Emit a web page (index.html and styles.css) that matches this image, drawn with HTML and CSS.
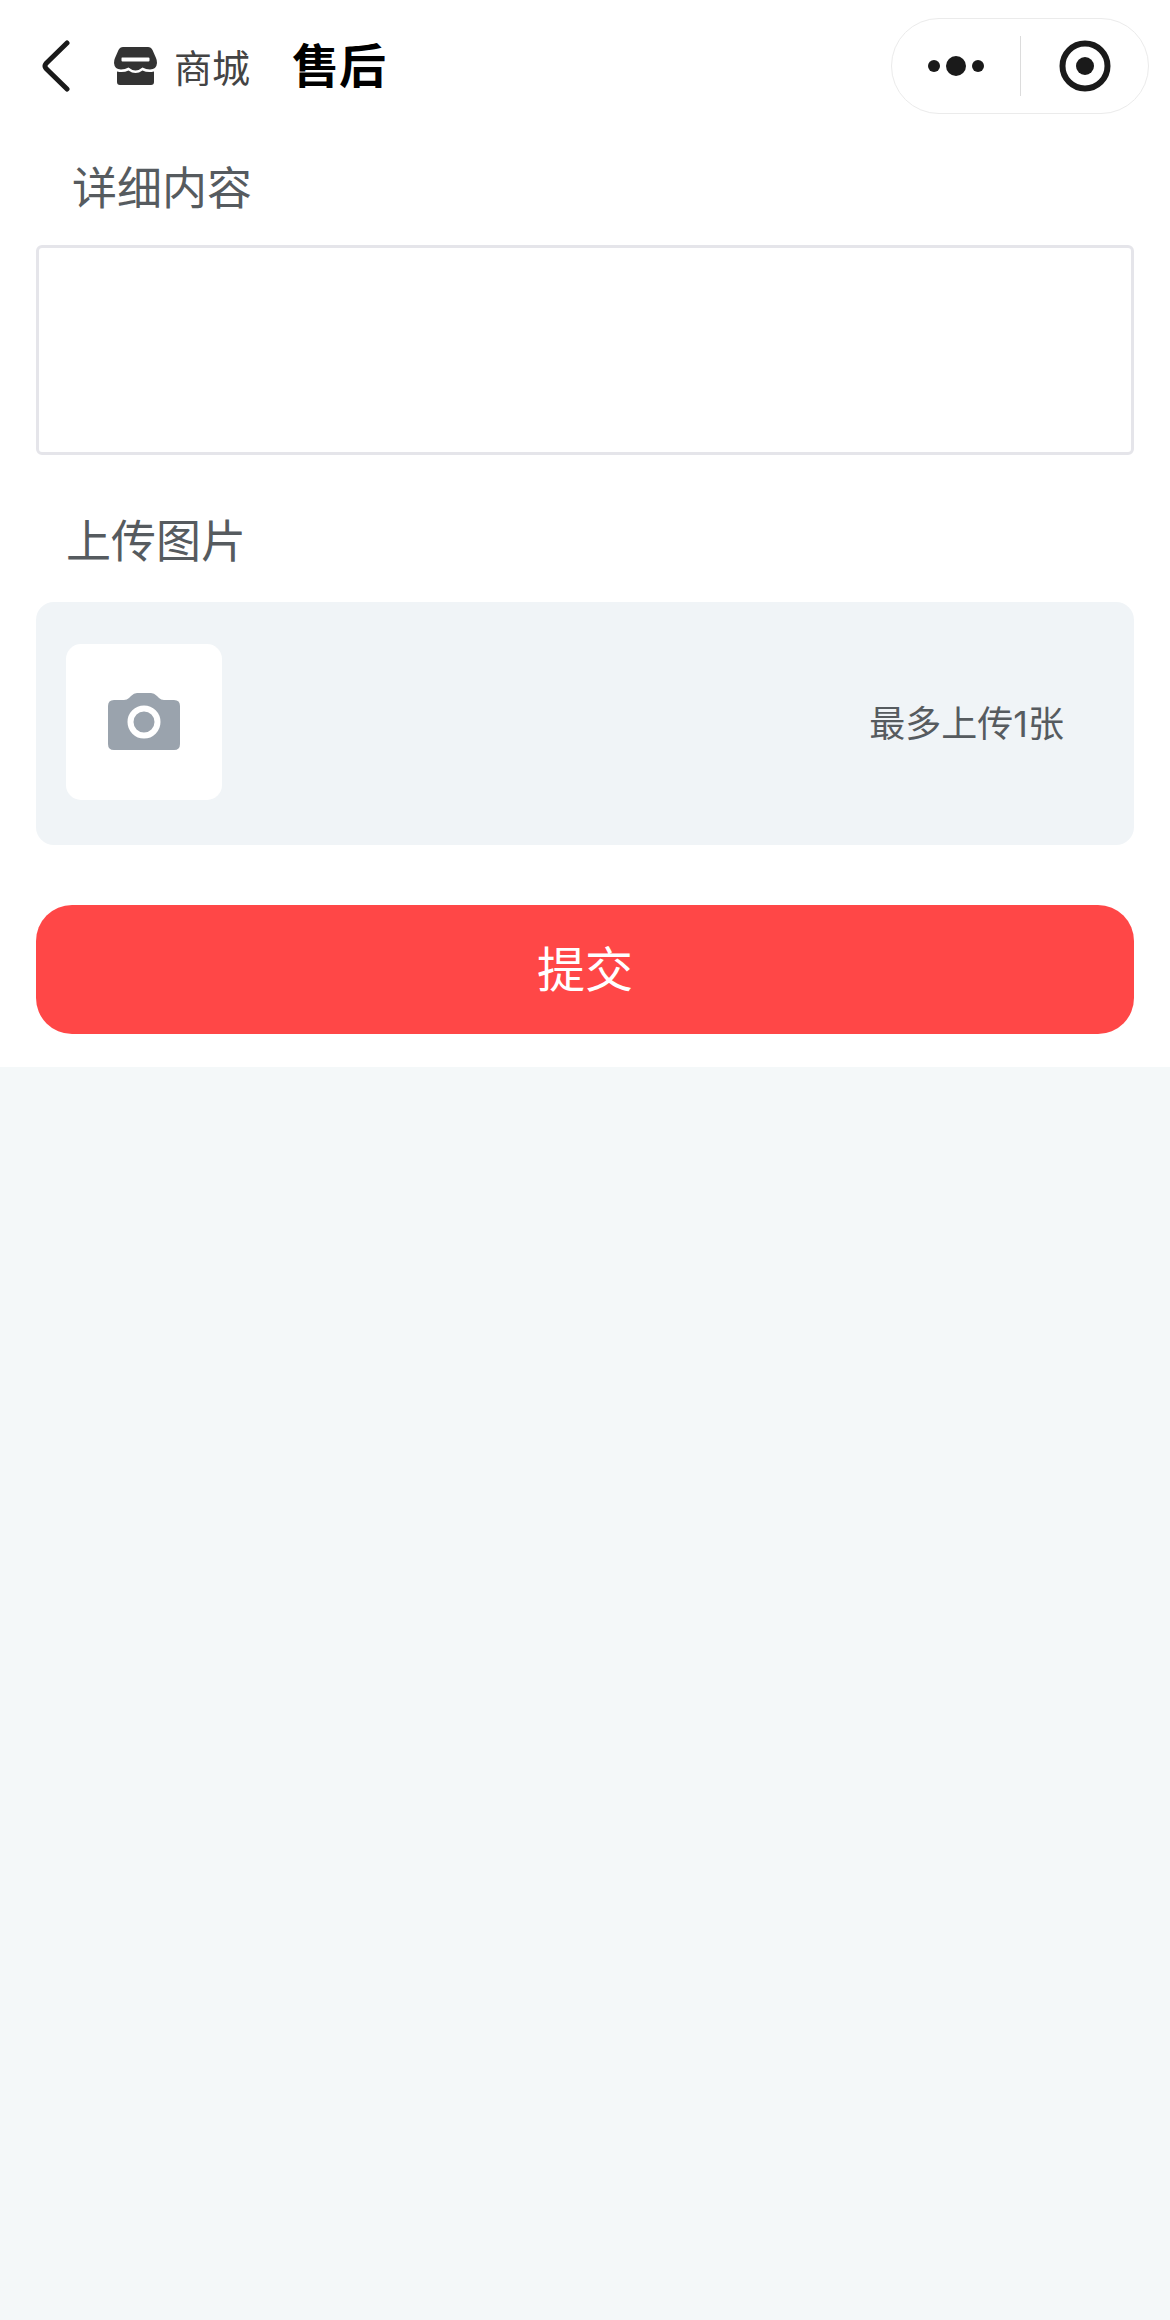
FILE: index.html
```html
<!DOCTYPE html>
<html lang="zh-CN">
<head>
  <meta charset="utf-8">
  <meta name="viewport" content="width=device-width, initial-scale=1">
  <title>售后</title>
  <link rel="stylesheet" href="styles.css">
</head>
<body>
  <div class="sheet">
    <header class="navbar">
      <button class="icon-button back" type="button" aria-label="返回">
        <svg width="30" height="54" viewBox="0 0 30 54" fill="none" stroke="#1a1a1a" stroke-width="5" stroke-linecap="round" stroke-linejoin="round">
          <path d="M26 4 5 24.5Q3 27 5 29.5L26 50"/>
        </svg>
      </button>
      <a class="mall" href="#">
        <svg width="43" height="38" viewBox="0 0 43 38" fill="#333" aria-hidden="true">
          <path fill-rule="evenodd" d="M9 0H34Q37 0 38.500 3L42 11Q43 13 43 16Q42.500 22.500 36 22.500Q32 22.500 28.500 20.500Q25 23.500 21.500 23.500Q18 23.500 14.500 20.500Q11 22.500 7 22.500Q.500 22.500 0 16Q0 13 1 11L4.500 3Q6 0 9 0ZM8 10.500Q7.500 10.500 7.500 11.500V13.500Q7.500 14.500 8.500 14.500H34.500Q35.500 14.500 35.500 13.500V11.500Q35.500 10.500 34.500 10.500Z"/>
          <path d="M3 24.500Q9.500 26 14.500 23.500Q18 26 21.500 26Q25 26 28.500 23.500Q33.500 26 40 24.500V35Q40 38 37 38H6Q3 38 3 35Z"/>
        </svg>
        <span class="mall-name">商城</span>
      </a>
      <h1 class="title">售后</h1>
      <div class="capsule">
        <button class="icon-button" type="button" aria-label="更多">
          <svg width="56" height="20" viewBox="0 0 56 20" fill="#1a1a1a">
            <circle cx="6" cy="10" r="6"/>
            <circle cx="28" cy="10" r="10"/>
            <circle cx="50" cy="10" r="6"/>
          </svg>
        </button>
        <button class="icon-button" type="button" aria-label="关闭">
          <svg width="52" height="52" viewBox="0 0 52 52">
            <circle cx="26" cy="26" r="22.500" fill="none" stroke="#1a1a1a" stroke-width="6"/>
            <circle cx="26" cy="26" r="9" fill="#1a1a1a"/>
          </svg>
        </button>
      </div>
    </header>

    <form class="form">
      <label class="label label-detail" for="detail">详细内容</label>
      <textarea class="detail" id="detail"></textarea>

      <label class="label label-upload" for="photo">上传图片</label>
      <div class="upload">
        <label class="tile">
          <input class="file" id="photo" type="file" accept="image/*" aria-label="上传图片">
          <svg width="72" height="58" viewBox="0 0 72 58" aria-hidden="true">
            <path fill="#9aa3ad" d="M6 7H16Q19 7 21 5L23 3Q26 0 29 0H43Q46 0 49 3L51 5Q53 7 56 7H66Q72 7 72 13V51Q72 57 66 57H6Q0 57 0 51V13Q0 7 6 7Z"/>
            <circle cx="36" cy="29" r="13.500" fill="none" stroke="#fff" stroke-width="6"/>
          </svg>
        </label>
        <span class="hint">最多上传1张</span>
      </div>

      <button class="submit" type="submit">提交</button>
    </form>
  </div>
</body>
</html>
```
FILE: styles.css
```css
* {
  box-sizing: border-box;
}

body {
  margin: 0;
  min-height: 100vh;
  background: #f4f8f9;
  color: #565b5f;
  font-family: Inter, "Noto Sans CJK SC", sans-serif;
}

button,
textarea {
  font: inherit;
}

svg {
  display: block;
}

.sheet {
  background: #fff;
}

.navbar {
  display: flex;
  align-items: center;
  height: 132px;
  padding: 0 21px 0 41px;
}

.icon-button {
  display: flex;
  align-items: center;
  justify-content: center;
  padding: 0;
  border: 0;
  background: none;
}

.mall {
  display: flex;
  align-items: center;
  gap: 17px;
  margin-left: 43px;
  color: #444;
  font-size: 38px;
  line-height: 48px;
  text-decoration: none;
}

.mall-name {
  padding-top: 3px;
}

.title {
  margin: 0 auto 0 42px;
  color: #000;
  font-size: 47px;
  font-weight: 700;
  line-height: 60px;
}

.capsule {
  display: grid;
  grid-template-columns: 1fr 1fr;
  align-items: center;
  width: 258px;
  height: 96px;
  border: 1px solid #ebebeb;
  border-radius: 48px;
}

.capsule .icon-button {
  height: 60px;
}

.capsule .icon-button + .icon-button {
  border-left: 1px solid #dcdcdc;
}

.form {
  display: flex;
  flex-direction: column;
  padding: 27px 36px 33px;
}

.label {
  font-size: 45px;
  line-height: 60px;
}

.label-detail {
  padding-left: 36px;
}

.detail {
  height: 210px;
  margin: 26px 0 57px;
  padding: 24px;
  border: 3px solid #e5e5ea;
  border-radius: 6px;
  background: #fff;
  color: inherit;
  font-size: 45px;
  resize: none;
}

.label-upload {
  padding-left: 30px;
}

.upload {
  display: flex;
  align-items: center;
  justify-content: space-between;
  margin: 30px 0 60px;
  padding: 42px 70px 45px 30px;
  border-radius: 18px;
  background: #f0f4f7;
}

.tile {
  display: flex;
  align-items: center;
  justify-content: center;
  width: 156px;
  height: 156px;
  border-radius: 15px;
  background: #fff;
}

.file {
  position: absolute;
  width: 1px;
  height: 1px;
  opacity: 0;
}

.hint {
  padding-top: 3px;
  font-size: 36px;
  line-height: 48px;
}

.submit {
  padding: 33px;
  border: 0;
  border-radius: 36px;
  background: #ff4747;
  color: #fff;
  font-size: 48px;
  line-height: 63px;
}
```
